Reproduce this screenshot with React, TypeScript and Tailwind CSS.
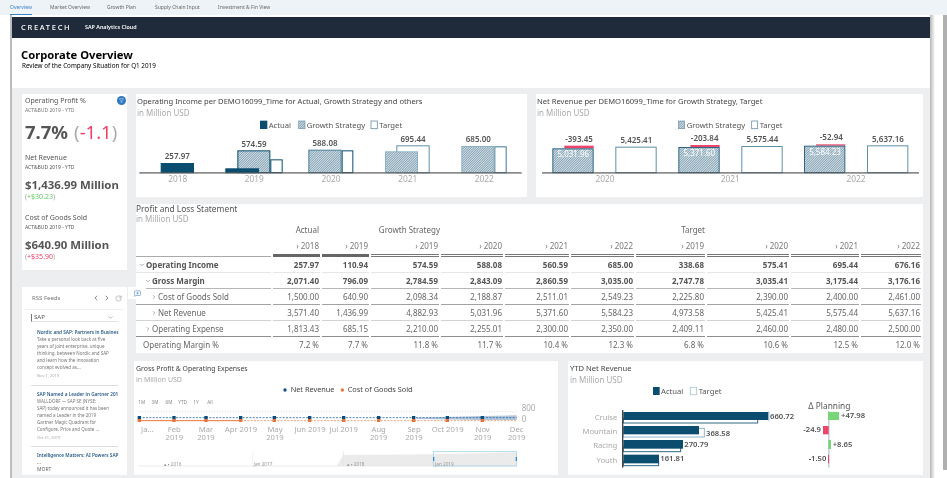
import { ChevronDown, ChevronLeft, ChevronRight, Filter, MessageSquarePlus, RotateCw } from "lucide-react";

const tabs = [
  { label: "Overview", width: "w-[40px]", active: true },
  { label: "Market Overview", width: "w-[57px]" },
  { label: "Growth Plan", width: "w-[48px]" },
  { label: "Supply Chain Input", width: "w-[63px]" },
  { label: "Investment & Fin View", width: "w-[60px]" },
];

const columns = ["2018", "2019", "2019", "2020", "2021", "2022", "2019", "2020", "2021", "2022"];

const rows = [
  { label: "Operating Income", pad: "pl-[3px]", chevron: "down", bold: true, line: "border-[#e4e6e8]", values: ["257.97", "110.94", "574.59", "588.08", "560.59", "685.00", "338.68", "575.41", "695.44", "676.16"] },
  { label: "Gross Margin", pad: "pl-[9px]", chevron: "down", bold: true, line: "border-[#b4b6b8]", values: ["2,071.40", "796.09", "2,784.59", "2,843.09", "2,860.59", "3,035.00", "2,747.78", "3,035.41", "3,175.44", "3,176.16"] },
  { label: "Cost of Goods Sold", pad: "pl-[15px]", chevron: "right", line: "border-[#a0a2a4]", values: ["1,500.00", "640.90", "2,098.34", "2,188.87", "2,511.01", "2,549.23", "2,225.80", "2,390.00", "2,400.00", "2,461.00"] },
  { label: "Net Revenue", pad: "pl-[15px]", chevron: "right", line: "border-[#d0d2d4]", values: ["3,571.40", "1,436.99", "4,882.93", "5,031.96", "5,371.60", "5,584.23", "4,973.58", "5,425.41", "5,575.44", "5,637.16"] },
  { label: "Operating Expense", pad: "pl-[9px]", chevron: "right", line: "border-[#8c8e90]", values: ["1,813.43", "685.15", "2,210.00", "2,255.01", "2,300.00", "2,350.00", "2,409.11", "2,460.00", "2,480.00", "2,500.00"] },
  { label: "Operating Margin %", pad: "pl-[7px]", line: "border-transparent", values: ["7.2 %", "7.7 %", "11.8 %", "11.7 %", "10.4 %", "12.3 %", "6.8 %", "10.6 %", "12.5 %", "12.0 %"] },
];

const feeds = [
  {
    title: "Nordic and SAP: Partners in Busines",
    body: ["Take a personal look back at five", "years of joint enterprise, unique", "thinking, between Nordic and SAP", "and learn how the innovation", "concept evolved as..."],
    date: "Nov 1, 2019",
  },
  {
    title: "SAP Named a Leader in Gartner 201",
    body: ["WALLDORF — SAP SE (NYSE:", "SAP) today announced it has been", "named a Leader in the 2019", "Gartner Magic Quadrant for", "Configure, Price and Quote ..."],
    date: "Oct 31, 2019",
  },
];

function Heading({ title, small }: { title: string; small?: boolean }) {
  return (
    <div className="h-[25px] pt-[2px] pl-[1px]">
      <div className={`${small ? "text-[6.9px]" : "text-[7.6px]"} leading-[11px] whitespace-nowrap text-[#444]`}>{title}</div>
      <div className={`${small ? "text-[7px]" : "text-[8px]"} leading-[11px] text-[#aaa]`}>in Million USD</div>
    </div>
  );
}

function Hatch({ id }: { id: string }) {
  return (
    <defs>
      <pattern id={id} width="5" height="5" patternUnits="userSpaceOnUse" patternTransform="rotate(45)">
        <rect width="5" height="5" fill="#d7e2e8" />
        <rect width="2.4" height="5" fill="#7f9fb0" />
      </pattern>
    </defs>
  );
}

function Box({ x1, x2, top, bottom = 248, fill, stroke = "#0a4d6e" }: { x1: number; x2: number; top: number; bottom?: number; fill: string; stroke?: string }) {
  return <rect x={x1 + 1.5} y={top + 1.5} width={x2 - x1 - 3} height={bottom - top - 1.5} fill={fill} stroke={stroke} strokeWidth="3" />;
}

function Label({ x, y, children, anchor = "middle", fill = "#555", size = 24, weight }: { x: number; y: number; children: React.ReactNode; anchor?: "start" | "middle" | "end"; fill?: string; size?: number; weight?: number }) {
  return (
    <text x={x} y={y} textAnchor={anchor} fill={fill} fontSize={size} fontWeight={weight}>
      {children}
    </text>
  );
}

function IncomeChart() {
  return (
    <svg width="391" height="78" viewBox="18 87 1173 234" className="block">
      <Hatch id="hatch-a" />
      <rect x="390" y="92" width="22" height="25" fill="#0a4d6e" />
      <Label x={416} y={114} anchor="start" size={23}>Actual</Label>
      <rect x="506" y="93" width="19" height="23" fill="url(#hatch-a)" stroke="#6f94a8" strokeWidth="2" />
      <Label x={530} y={114} anchor="start" size={23}>Growth Strategy</Label>
      <rect x="723" y="93" width="19" height="23" fill="#fff" stroke="#6f94a8" strokeWidth="2.5" />
      <Label x={748} y={114} anchor="start" size={23}>Target</Label>

      <Box x1={92} x2={192} top={219} fill="#0a4d6e" />
      <Box x1={421} x2={458} top={208} fill="#fff" />
      <Box x1={322} x2={421} top={181} fill="url(#hatch-a)" />
      <Box x1={286} x2={387} top={235} fill="#0a4d6e" />
      <Box x1={635} x2={670} top={181} fill="#fff" />
      <Box x1={535} x2={635} top={179} fill="url(#hatch-a)" stroke="#4a8099" />
      <Box x1={799} x2={899} top={166} fill="#fff" stroke="#5e90a8" />
      <Box x1={765} x2={864} top={184} fill="url(#hatch-a)" stroke="#8fb2c2" />
      <Box x1={1093} x2={1130} top={169} fill="#fff" stroke="#3f7893" />
      <Box x1={994} x2={1093} top={168} fill="url(#hatch-a)" stroke="#8fb2c2" />
      <rect x="28" y="247" width="1147" height="3.5" fill="#555" />

      <Label x={142} y={208} weight={600}>257.97</Label>
      <Label x={372} y={170} weight={600}>574.59</Label>
      <Label x={585} y={168} weight={600}>588.08</Label>
      <Label x={849} y={155} weight={600}>695.44</Label>
      <Label x={1045} y={156} weight={600}>685.00</Label>
      {[["2018", 143], ["2019", 373], ["2020", 603], ["2021", 833], ["2022", 1063]].map(([year, x]) => (
        <Label key={year} x={x as number} y={277} fill="#aaa" size={25}>{year}</Label>
      ))}
    </svg>
  );
}

function RevenueChart() {
  const groups = [
    { x: 67, top: 175, red: 167, gap: "-393.45", gapX: 147, gapY: 157, inner: "5,031.96", tx: 256, tTop: 170, target: "5,425.41", tLabelY: 158 },
    { x: 445, top: 171, red: 165, gap: "-203.84", gapX: 524, gapY: 154, inner: "5,371.60", tx: 634, tTop: 168, target: "5,575.44", tLabelY: 157 },
    { x: 822, top: 167, red: 163, gap: "-52.94", gapX: 904, gapY: 151, inner: "5,584.23", tx: 1011, tTop: 166, target: "5,637.16", tLabelY: 155 },
  ];
  return (
    <svg width="387" height="78" viewBox="18 87 1161 234" className="block">
      <Hatch id="hatch-b" />
      <rect x="445" y="93" width="19" height="23" fill="url(#hatch-b)" stroke="#6f94a8" strokeWidth="2" />
      <Label x={470} y={114} anchor="start" size={23}>Growth Strategy</Label>
      <rect x="665" y="93" width="18" height="23" fill="#fff" stroke="#6f94a8" strokeWidth="2.5" />
      <Label x={689} y={114} anchor="start" size={23}>Target</Label>
      {groups.map((g) => (
        <g key={g.x}>
          <rect x={g.x + 36} y={g.red} width={88} height={g.top - g.red} fill="#ef4469" />
          <Box x1={g.x} x2={g.x + 124} top={g.top} fill="url(#hatch-b)" stroke="#2f6885" />
          <Label x={g.x + 63} y={g.top + 27} fill="#fff" size={24}>{g.inner}</Label>
          <Box x1={g.tx} x2={g.tx + 124} top={g.tTop} fill="#fff" stroke="#5e90a8" />
          <Label x={g.gapX} y={g.gapY} weight={600}>{g.gap}</Label>
          <Label x={g.tx + 63} y={g.tLabelY} weight={600}>{g.target}</Label>
        </g>
      ))}
      <rect x="36" y="247" width="1131" height="3.5" fill="#555" />
      {[["2020", 225], ["2021", 601], ["2022", 978]].map(([year, x]) => (
        <Label key={year} x={x as number} y={277} fill="#aaa" size={25}>{year}</Label>
      ))}
    </svg>
  );
}

function TrendChart() {
  const points = [28, 132, 228, 332, 433, 539, 641, 746, 851, 952, 1057];
  const months = [
    { x: 52, a: "Ja..." },
    { x: 133, a: "Feb", b: "2019" },
    { x: 228, a: "Mar", b: "2019" },
    { x: 333, a: "Apr 2019" },
    { x: 435, a: "May", b: "2019" },
    { x: 540, a: "Jun 2019" },
    { x: 641, a: "Jul 2019" },
    { x: 746, a: "Aug", b: "2019" },
    { x: 852, a: "Sep", b: "2019" },
    { x: 953, a: "Oct 2019" },
    { x: 1058, a: "Nov", b: "2019" },
    { x: 1160, a: "Dec", b: "2019" },
  ];
  return (
    <svg width="424" height="91" viewBox="12 87 1272 273" className="block">
      <circle cx="465" cy="105" r="5" fill="#0a4d8c" />
      <Label x={482} y={111} anchor="start" size={22} fill="#444">Net Revenue</Label>
      <circle cx="637" cy="105" r="5" fill="#e8743b" />
      <Label x={653} y={111} anchor="start" size={22} fill="#444">Cost of Goods Sold</Label>
      {[["1M", 35], ["3M", 75], ["6M", 117], ["YTD", 158], ["1Y", 198], ["All", 240]].map(([t, x]) => (
        <Label key={t} x={x as number} y={147} size={14} fill="#888">{t}</Label>
      ))}
      <line x1="28" y1="170" x2="1160" y2="170" stroke="#ccc" strokeWidth="2" strokeDasharray="3 5" />
      <Label x={1175} y={169} anchor="start" size={24} fill="#aaa">800</Label>
      <Label x={1175} y={200} anchor="start" size={24} fill="#aaa">0</Label>
      <polygon points="860,188 1057,183 1160,181 1160,195 1057,195 860,192" fill="#b3c5da" />
      <line x1="28" y1="188" x2="1160" y2="188" stroke="#2d6aa8" strokeWidth="2.5" strokeDasharray="6 4" />
      <line x1="28" y1="197" x2="332" y2="197" stroke="#e8743b" strokeWidth="3" />
      <line x1="332" y1="197" x2="1160" y2="197" stroke="#e8743b" strokeWidth="2" strokeDasharray="6 4" />
      {points.map((x) => (
        <g key={x}>
          <rect x={x - 5} y={183} width="10" height="10" fill="#0a4d7c" />
          <rect x={x - 5} y={192} width="10" height="9" fill="#e8743b" />
        </g>
      ))}
      {months.map((m) => (
        <g key={m.x}>
          <Label x={m.x} y={231} size={23} fill="#aaa">{m.a}</Label>
          {m.b && <Label x={m.x} y={256} size={23} fill="#aaa">{m.b}</Label>}
        </g>
      ))}
      <polygon points="620,333 640,300 910,298 1160,292 1160,333" fill="#ebebeb" />
      <line x1="25" y1="333" x2="1160" y2="333" stroke="#e2e2e2" strokeWidth="2" />
      <line x1="368" y1="288" x2="368" y2="333" stroke="#eee" strokeWidth="2" />
      <line x1="640" y1="288" x2="640" y2="333" stroke="#e4e4e4" strokeWidth="2" />
      <rect x="910" y="290" width="250" height="43" fill="none" stroke="#a3d2ee" strokeWidth="2.5" />
      <rect x="909" y="306" width="4" height="12" fill="#3b8ad0" />
      <rect x="1157" y="306" width="4" height="12" fill="#3b8ad0" />
      <Label x={128} y={333} size={14} fill="#999">▴ ▪ 2016</Label>
      <Label x={399} y={333} size={14} fill="#999">Jan 2017</Label>
      <Label x={677} y={333} size={14} fill="#999">▴ ▪ 2018</Label>
      <Label x={943} y={333} size={14} fill="#999">Jan 2019</Label>
    </svg>
  );
}

function YtdChart() {
  const bars = [
    { name: "Cruise", nameY: 196, top: 171, bottom: 195, end: 625, tEnd: 593, tTop: 190, tBottom: 204, tStroke: "#2f6885", value: "660.72", vx: 630, vy: 191 },
    { name: "Mountain", nameY: 238, top: 213, bottom: 238, end: 417, tEnd: 433, tTop: 220, tBottom: 246, tStroke: "#8fb6c8", value: "368.58", vx: 438, vy: 242 },
    { name: "Racing", nameY: 280, top: 255, bottom: 281, end: 369, tEnd: 362, tTop: 276, tBottom: 290, tStroke: "#2f6885", value: "270.79", vx: 373, vy: 276 },
    { name: "Youth", nameY: 323, top: 299, bottom: 325, end: 297, tEnd: 296, tTop: 320, tBottom: 332, tStroke: "#2f6885", value: "161.81", vx: 301, vy: 318 },
  ];
  return (
    <svg width="355" height="91" viewBox="24 87 1065 273" className="block">
      <rect x="279" y="96" width="20" height="24" fill="#0a4d6e" />
      <Label x={303} y={118} anchor="start" size={23}>Actual</Label>
      <rect x="391" y="97" width="19" height="22" fill="#fff" stroke="#a9c6d6" strokeWidth="2.5" />
      <Label x={416} y={118} anchor="start" size={23}>Target</Label>
      <Label x={745} y={162} anchor="start" size={25}>Δ Planning</Label>

      {bars.map((b) => (
        <g key={b.name}>
          <Label x={172} y={b.nameY} anchor="end" size={23} fill="#aaa">{b.name}</Label>
          <rect x={190} y={b.tTop} width={b.tEnd - 190} height={b.tBottom - b.tTop} fill="#fff" stroke={b.tStroke} strokeWidth="3" />
          <rect x={190} y={b.top} width={b.end - 190} height={b.bottom - b.top} fill="#0a4d6e" />
          <Label x={b.vx} y={b.vy} anchor="start" size={23} weight={600}>{b.value}</Label>
        </g>
      ))}
      <rect x="625" y="169" width="3" height="28" fill="#8fb6c8" />
      <rect x="186" y="165" width="4" height="173" fill="#444" />

      <rect x="804" y="168" width="5" height="170" fill="#c5d5e0" />
      <rect x="804" y="171" width="33" height="24" fill="#78d678" />
      <rect x="789" y="213" width="17" height="25" fill="#ef4469" />
      <rect x="805" y="255" width="8" height="27" fill="#78d678" />
      <rect x="804" y="299" width="3" height="26" fill="#ef4469" />
      <Label x={843} y={190} anchor="start" size={23} weight={600}>+47.98</Label>
      <Label x={783} y={232} anchor="end" size={23} weight={600}>-24.9</Label>
      <Label x={818} y={276} anchor="start" size={23} weight={600}>+8.65</Label>
      <Label x={799} y={318} anchor="end" size={23} weight={600}>-1.50</Label>
    </svg>
  );
}

function Kpi({ title, value, delta, tone }: { title: string; value: string; delta: string; tone: string }) {
  return (
    <div>
      <div className="text-[7px] leading-[10px] text-[#555]">{title}</div>
      <div className="text-[5px] leading-[8px] text-[#555]">ACT&amp;BUD 2019 - YTD</div>
      <div className="mt-[7px] text-[11.4px] leading-[14px] font-bold whitespace-nowrap text-[#555]">{value}</div>
      <div className="text-[7px] leading-[9px] text-[#aaa]">
        (<span className={tone}>{delta}</span>)
      </div>
    </div>
  );
}

function KpiPanel() {
  return (
    <div className="relative h-[176px] bg-white pt-[2px] pl-[3px]">
      <div className="absolute top-[2px] right-[1px] flex h-[9px] w-[9px] items-center justify-center rounded-full bg-[#2f78c2]">
        <Filter size={5} color="#fff" />
      </div>
      <div className="text-[7px] leading-[10px] text-[#555]">Operating Profit %</div>
      <div className="text-[5px] leading-[8px] text-[#777]">ACT&amp;BUD 2019 - YTD</div>
      <div className="mt-[5px] flex items-baseline gap-[6px] text-[18.5px] leading-[26px] whitespace-nowrap">
        <span className="font-bold text-[#555]">7.7%</span>
        <span className="text-[#aaa]">
          (<span className="text-[#f23f67]">-1.1</span>)
        </span>
      </div>
      <div className="mt-[8px] flex flex-col gap-[12px]">
        <Kpi title="Net Revenue" value="$1,436.99 Million" delta="+$30.23" tone="text-[#62c862]" />
        <Kpi title="Cost of Goods Sold" value="$640.90 Million" delta="+$35.90" tone="text-[#f23f67]" />
      </div>
    </div>
  );
}

function FeedItem({ title, body, date }: { title: string; body: string[]; date: string }) {
  return (
    <div>
      <div className="text-[4.7px] leading-[7px] font-semibold whitespace-nowrap text-[#2a5d8a]">{title}</div>
      {body.map((line) => (
        <div key={line} className="text-[4.5px] leading-[7px] whitespace-nowrap text-[#777]">
          {line}
        </div>
      ))}
      <div className="mt-[1px] text-[4px] leading-[7px] text-[#aaa]">{date}</div>
    </div>
  );
}

function RssPanel() {
  return (
    <div className="h-[188px] overflow-hidden bg-white">
      <div className="mx-[3px] flex h-[23px] items-center border-b border-[#f0f0f0] pr-[2px] pl-[7px] text-[6px] text-[#777]">
        <span className="flex-1">RSS Feeds</span>
        <ChevronLeft size={8} color="#555" />
        <ChevronRight size={8} color="#555" className="ml-[3px]" />
        <RotateCw size={7} color="#999" className="ml-[4px]" />
      </div>
      <div className="mx-[9px] mt-[4px] flex h-[8px] items-center border-b border-l border-[#e4e4e4] border-l-[#777] pr-[4px] pl-[2px] text-[6px] text-[#555]">
        <span className="flex-1">SAP</span>
        <ChevronDown size={7} color="#888" />
      </div>
      <div className="mx-[9px] border-b border-[#ddd] pt-[7px] pb-[6px] pl-[6px]">
        <FeedItem {...feeds[0]} />
      </div>
      <div className="mx-[9px] border-b border-[#ddd] pt-[5px] pb-[5px] pl-[6px]">
        <FeedItem {...feeds[1]} />
      </div>
      <div className="mx-[9px] pt-[5px] pl-[6px]">
        <div className="text-[4.7px] leading-[7px] font-semibold whitespace-nowrap text-[#2a5d8a]">Intelligence Matters: AI Powers SAP</div>
        <div className="text-[5px] leading-[7px] text-[#666]">...</div>
        <div className="text-[5px] leading-[7px] text-[#666]">MORT</div>
      </div>
    </div>
  );
}

function PnlTable() {
  const grid = "grid grid-cols-[137px_49px_49px_70px_64px_66px_65px_71px_84px_70px_62px]";
  return (
    <div className="relative mt-[7px] ml-[2px] h-[149px] bg-white">
      <div className="absolute top-[83px] left-[-8px] flex h-[12px] w-[18px] items-center justify-center bg-white">
        <MessageSquarePlus size={7} color="#4a86c0" />
      </div>
      <div className="h-[18px] text-[8.4px] leading-[10px]">
        <div className="text-[#555]">Profit and Loss Statement</div>
        <div className="text-[8px] text-[#aaa]">in Million USD</div>
      </div>
      <div className={`${grid} h-[16px] text-[8px] leading-[16px] text-[#666]`}>
        <div />
        <div className="pr-[3px] text-right">Actual</div>
        <div />
        <div className="pr-[1px] text-right whitespace-nowrap">Growth Strategy</div>
        <div />
        <div />
        <div />
        <div className="pr-[2px] text-right">Target</div>
      </div>
      <div className={`${grid} text-[8px] text-[#777]`}>
        {["", ...columns].map((year, i) => (
          <div
            key={i}
            className={
              i === 0
                ? "mr-[2px] h-[19px] border-b border-[#aaa]"
                : i < 3
                  ? "mr-[2px] h-[19px] border-b-[3px] border-[#666] pr-[1px] text-right leading-[16px]"
                  : "mr-[2px] h-[19px] border-b-[3px] border-double border-[#777] pr-[1px] text-right leading-[16px]"
            }
          >
            {year && <span>› {year}</span>}
          </div>
        ))}
      </div>
      {rows.map((row) => (
        <div key={row.label} className={`${grid} h-[16px] text-[8px] ${row.bold ? "font-bold text-[#555]" : "text-[#666]"}`}>
          <div className={`mr-[2px] flex h-[16px] items-center border-b ${row.line} ${row.pad}`}>
            {row.chevron === "down" && <ChevronDown size={6} className="mr-[1px]" />}
            {row.chevron === "right" && <ChevronRight size={6} className="mr-[1px]" />}
            <span className="whitespace-nowrap">{row.label}</span>
          </div>
          {row.values.map((value, i) => (
            <div key={i} className={`mr-[2px] h-[16px] border-b ${row.line} pr-[1px] text-right leading-[15px]`}>
              {value}
            </div>
          ))}
        </div>
      ))}
    </div>
  );
}

export default function App() {
  return (
    <div className="flex h-[478px] w-[947px] flex-col overflow-hidden bg-white font-['Noto_Sans',sans-serif] blur-[0.4px]">
      <nav className="flex h-[15px] shrink-0 items-stretch bg-[#eef3f7] pl-[10px] text-[5px] text-[#666]">
        {tabs.map((tab) => (
          <div key={tab.label} className={`${tab.width} leading-[14px] whitespace-nowrap`}>
            <span className={tab.active ? "inline-block h-[15px] border-b border-[#3b7fc4] text-[#3b7fc4]" : ""}>{tab.label}</span>
          </div>
        ))}
      </nav>
      <div className="flex flex-1">
        <div className="w-[10px]" />
        <div className="w-[2px] bg-[#bdbdbd]" />
        <main className="flex w-[918px] flex-col pt-[2px]">
          <header className="flex h-[21px] shrink-0 items-center bg-[#1f2a3a] pl-[9px] text-white">
            <span className="w-[64px] text-[7.5px] font-medium tracking-[1.7px]">CREATECH</span>
            <span className="text-[5.4px] font-semibold">SAP Analytics Cloud</span>
          </header>
          <div className="h-[50px] shrink-0 pt-[9px] pl-[9px] text-black">
            <h1 className="text-[11.2px] leading-[15px] font-bold">Corporate Overview</h1>
            <p className="pl-[1px] text-[6.3px] leading-[8px]">Review of the Company Situation for Q1 2019</p>
          </div>
          <div className="flex flex-1 gap-[7px] bg-[#eceef0] pt-[6px] pl-[10px]">
            <div className="flex w-[105px] flex-col gap-[17px]">
              <KpiPanel />
              <RssPanel />
            </div>
            <div className="w-[789px]">
              <div className="ml-[2px] flex gap-[9px]">
                <section className="h-[103px] w-[391px] bg-white">
                  <Heading title="Operating Income per DEMO16099_Time for Actual, Growth Strategy and others" />
                  <IncomeChart />
                </section>
                <section className="h-[103px] w-[387px] bg-white">
                  <Heading title="Net Revenue per DEMO16099_Time for Growth Strategy, Target" />
                  <RevenueChart />
                </section>
              </div>
              <PnlTable />
              <div className="mt-[8px] flex gap-[10px]">
                <section className="h-[114px] w-[424px] bg-white">
                  <div className="pl-[1px]">
                    <Heading small title="Gross Profit & Operating Expenses" />
                  </div>
                  <div className="-mt-[2px]">
                    <TrendChart />
                  </div>
                </section>
                <section className="h-[114px] w-[355px] bg-white">
                  <div className="pl-[1px]">
                    <Heading title="YTD Net Revenue" />
                  </div>
                  <div className="-mt-[2px]">
                    <YtdChart />
                  </div>
                </section>
              </div>
            </div>
          </div>
        </main>
        <div className="w-[5px] bg-gradient-to-r from-[#b5b5b5] to-white" />
        <div className="flex-1" />
        <div className="h-[455px] w-[4px] bg-[#b0b0b0]" />
      </div>
    </div>
  );
}
